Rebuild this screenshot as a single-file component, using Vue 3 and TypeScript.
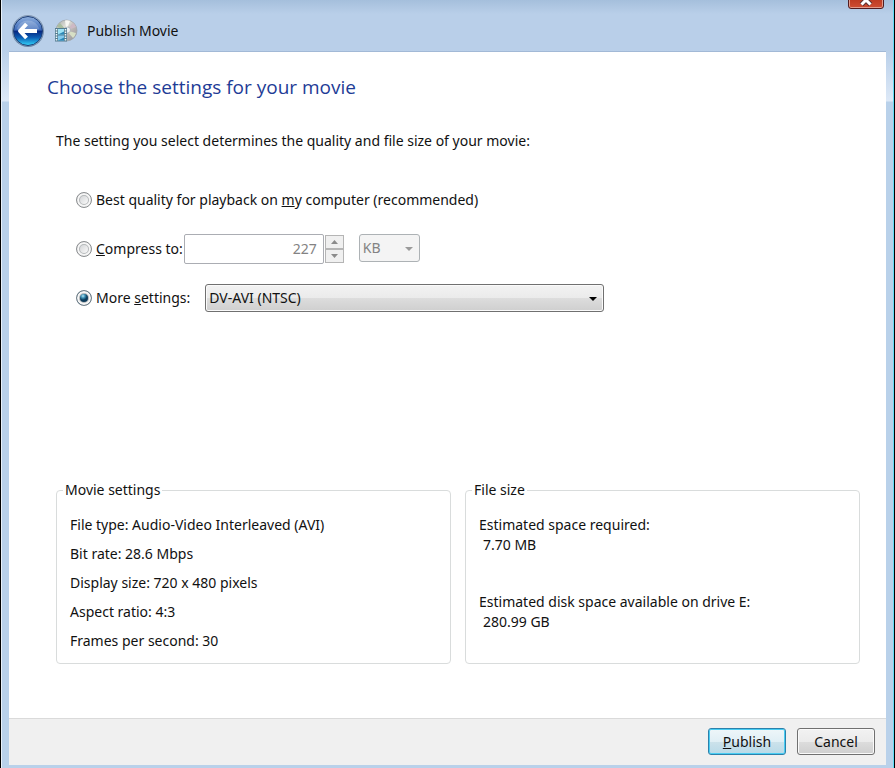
<script setup lang="ts">
import { ref } from 'vue'

type Mode = 'best' | 'compress' | 'more'

const mode = ref<Mode>('more')
const size = ref(227)
const unit = ref('KB')
const preset = ref('DV-AVI (NTSC)')

const movieSettings = [
  { name: 'File type', value: 'Audio-Video Interleaved (AVI)' },
  { name: 'Bit rate', value: '28.6 Mbps' },
  { name: 'Display size', value: '720 x 480 pixels' },
  { name: 'Aspect ratio', value: '4:3' },
  { name: 'Frames per second', value: '30' },
]

const fileSizes = [
  { name: 'Estimated space required', value: '7.70 MB' },
  { name: 'Estimated disk space available on drive E', value: '280.99 GB' },
]
</script>

<template>
  <div class="window">
    <header class="titlebar">
      <button class="back" type="button" aria-label="Back">
        <svg viewBox="0 0 34 34" width="34" height="34" aria-hidden="true">
          <defs>
            <linearGradient id="orb" x1="0" y1="0" x2="0" y2="1">
              <stop offset="0" stop-color="#8fb0de" />
              <stop offset="0.47" stop-color="#3a68b8" />
              <stop offset="0.5" stop-color="#06257f" />
              <stop offset="0.72" stop-color="#0b5cb4" />
              <stop offset="1" stop-color="#35d6fa" />
            </linearGradient>
            <linearGradient id="rim" x1="0" y1="0" x2="0" y2="1">
              <stop offset="0" stop-color="#5d6f88" />
              <stop offset="1" stop-color="#2a4a6c" />
            </linearGradient>
          </defs>
          <circle cx="17" cy="17" r="16" fill="url(#rim)" opacity="0.55" />
          <circle cx="17" cy="17" r="15" fill="#a9c2de" />
          <circle cx="17" cy="17" r="14.500" fill="url(#orb)" stroke="#1c3c74" stroke-width="1" />
          <path d="M5.500 15 A12 12 0 0 1 28.500 15 Q17 20 5.500 15Z" fill="#fff" opacity="0.2" />
          <path
            d="M15.500 10 L9 17 L15.500 24 M9.500 17 H26"
            fill="none"
            stroke="#fff"
            stroke-width="4"
            stroke-linejoin="round"
          />
        </svg>
      </button>
      <svg class="app-icon" viewBox="0 0 24 24" width="24" height="24" aria-hidden="true">
        <defs>
          <linearGradient id="disc" x1="0" y1="0" x2="1" y2="1">
            <stop offset="0" stop-color="#a3a8a5" />
            <stop offset="0.35" stop-color="#dcdcd6" />
            <stop offset="0.6" stop-color="#bcb6b5" />
            <stop offset="1" stop-color="#8d9296" />
          </linearGradient>
        </defs>
        <circle cx="12.500" cy="11.500" r="10.500" fill="url(#disc)" stroke="#9da1a3" stroke-width="0.700" />
        <path d="M12.500 11.500 L11 1.500 A10 10 0 0 1 16 1.800Z" fill="#f7f7f2" />
        <path d="M12.500 11.500 L19 4 A10 10 0 0 1 22 8Z" fill="#cdb9c4" />
        <path d="M12.500 11.500 L22 14 A10 10 0 0 1 19 19Z" fill="#d7dfc5" />
        <path d="M12.500 11.500 L3 8 A10 10 0 0 1 6 4Z" fill="#a9bda0" />
        <circle cx="13.500" cy="11" r="3" fill="#e9eef3" stroke="#a5abb0" stroke-width="0.800" />
        <rect x="1" y="9" width="12" height="13.500" fill="#547d91" />
        <rect x="4" y="10" width="6" height="5.500" fill="#9de2f5" />
        <rect x="4" y="16.500" width="6" height="5" fill="#83caee" />
        <path d="M4 15.500 L10 12.500 V15.500Z M4 21.500 L10 18.500 V21.500Z" fill="#2b87b7" />
        <path
          d="M2.500 10 V22 M11.500 10 V22"
          stroke="#eff8f9"
          stroke-width="1.500"
          stroke-dasharray="1.500 1"
        />
      </svg>
      <span class="app-name">Publish Movie</span>
      <button class="close" type="button" aria-label="Close">
        <svg viewBox="0 0 14 12" width="14" height="12" aria-hidden="true">
          <path d="M2.500 1.500 L11.500 10.500 M11.500 1.500 L2.500 10.500" stroke="#5c3030" stroke-width="5" />
          <path d="M2.500 1.500 L11.500 10.500 M11.500 1.500 L2.500 10.500" stroke="#fff" stroke-width="3" />
        </svg>
      </button>
    </header>

    <form class="page" @submit.prevent>
      <main class="content">
        <h1>Choose the settings for your movie</h1>
        <p class="intro">
          The setting you select determines the quality and file size of your movie:
        </p>

        <div class="options" role="radiogroup" aria-label="Movie quality">
          <div class="option">
            <input id="best" v-model="mode" type="radio" name="mode" value="best" />
            <label for="best">Best quality for playback on <u>m</u>y computer (recommended)</label>
          </div>
          <div class="option">
            <input id="compress" v-model="mode" type="radio" name="mode" value="compress" />
            <label for="compress"><u>C</u>ompress to:</label>
            <input
              v-model="size"
              class="size"
              type="text"
              aria-label="Size"
              :disabled="mode !== 'compress'"
            />
            <span class="spinner">
              <button
                type="button"
                aria-label="Increase size"
                :disabled="mode !== 'compress'"
                @click="size++"
              >
                <svg viewBox="0 0 7 4" width="7" height="4"><path d="M0 4 L3.500 0 L7 4Z" /></svg>
              </button>
              <button
                type="button"
                aria-label="Decrease size"
                :disabled="mode !== 'compress'"
                @click="size--"
              >
                <svg viewBox="0 0 7 4" width="7" height="4"><path d="M0 0 L3.500 4 L7 0Z" /></svg>
              </button>
            </span>
            <span class="dropdown unit">
              <select v-model="unit" aria-label="Unit" :disabled="mode !== 'compress'">
                <option>KB</option>
                <option>MB</option>
                <option>GB</option>
              </select>
              <svg viewBox="0 0 8 4" width="8" height="4"><path d="M0 0 H8 L4 4Z" /></svg>
            </span>
          </div>
          <div class="option">
            <input id="more" v-model="mode" type="radio" name="mode" value="more" />
            <label for="more">More <u>s</u>ettings:</label>
            <span class="dropdown preset">
              <select v-model="preset" aria-label="More settings" :disabled="mode !== 'more'">
                <option>DV-AVI (NTSC)</option>
              </select>
              <svg viewBox="0 0 8 4" width="8" height="4"><path d="M0 0 H8 L4 4Z" /></svg>
            </span>
          </div>
        </div>

        <div class="summary">
          <fieldset>
            <legend>Movie settings</legend>
            <ul class="facts">
              <li v-for="item in movieSettings" :key="item.name">
                {{ item.name }}: {{ item.value }}
              </li>
            </ul>
          </fieldset>
          <fieldset>
            <legend>File size</legend>
            <dl class="sizes">
              <div v-for="item in fileSizes" :key="item.name">
                <dt>{{ item.name }}:</dt>
                <dd>{{ item.value }}</dd>
              </div>
            </dl>
          </fieldset>
        </div>
      </main>

      <footer class="actions">
        <button class="push primary" type="submit"><span><u>P</u>ublish</span></button>
        <button class="push" type="button">Cancel</button>
      </footer>
    </form>
  </div>
</template>

<style>
body {
  margin: 0;
}
</style>

<style scoped>
* {
  box-sizing: border-box;
}

.window {
  display: flex;
  flex-direction: column;
  min-height: 100vh;
  padding: 0 8px 3px 7px;
  border-left: 1px solid #000;
  border-right: 1px solid #000;
  box-shadow: inset 1px 0 #e8f1fa, inset -1px 0 #5fdcf5;
  background: linear-gradient(#a5bfdc 0, #b9cfe9 14px, #b9cfe9 50px, #dde9f7 101px, #b9d1ea 102px);
  color: #111;
  font: 14px/20px "Noto Sans", "Open Sans", sans-serif;
}

button,
input,
select {
  margin: 0;
  color: inherit;
  font: inherit;
}

.titlebar {
  position: relative;
  display: flex;
  align-items: center;
  height: 51px;
  padding: 11px 0 0 3px;
}

.back {
  display: block;
  width: 34px;
  height: 34px;
  padding: 0;
  border: 0;
  border-radius: 50%;
  background: none;
}

.back svg,
.close svg,
.app-icon {
  display: block;
}

.app-icon {
  margin: 0 9px 0 9px;
}

.close {
  position: absolute;
  top: -10px;
  right: 2px;
  display: flex;
  align-items: flex-end;
  justify-content: center;
  width: 36px;
  height: 19px;
  padding: 0 0 2px;
  border: 1px solid #521c20;
  border-radius: 0 0 3px 3px;
  box-shadow: inset 0 0 0 1px #e29a8b;
  background: linear-gradient(#d98b7c, #bd3a22 50%, #cf4e33);
}

.page {
  display: flex;
  flex: 1;
  flex-direction: column;
  margin-left: 1px;
  border-top: 1px solid #a2b9d6;
  background: #fff;
}

.content {
  display: flex;
  flex: 1;
  flex-direction: column;
  padding: 21px 26px 54px 38px;
}

h1 {
  margin: 0;
  color: #1e3c96;
  font-family: "Open Sans", "Noto Sans", sans-serif;
  font-size: 19px;
  font-weight: 400;
  line-height: 28px;
}

.intro {
  margin: 30px 0 0 9px;
}

.options {
  display: flex;
  flex-direction: column;
  gap: 19px;
  margin: 34px 0 0 29px;
}

.option {
  display: flex;
  align-items: center;
  height: 30px;
}

input[type="radio"] {
  flex: none;
  width: 16px;
  height: 16px;
  margin-right: 4px;
  border: 1px solid #8b8e90;
  border-radius: 50%;
  appearance: none;
  box-shadow: inset 0 0 0 2px #f6f6f6, inset 0 0 0 3px #b5b8ba;
  background: linear-gradient(135deg, #c5c8cb, #f8f8f8 75%);
}

input[type="radio"]:checked {
  border-color: #6f7e88;
  background: radial-gradient(circle at 6px 5px, #b7e7f5 0, #3c8fb3 2px, #0c3c5c 4px, #0c3c5c 5px);
}

.size {
  width: 140px;
  height: 30px;
  margin-left: 1px;
  padding: 0 6px 2px;
  border: 1px solid #abadb3;
  border-radius: 2px;
  background: #fff;
  text-align: right;
}

.size:disabled,
.unit select:disabled {
  color: #838383;
}

.spinner {
  display: flex;
  flex-direction: column;
  width: 19px;
  height: 28px;
  margin-left: 1px;
}

.spinner button {
  display: flex;
  flex: 1;
  align-items: center;
  justify-content: center;
  padding: 0;
  border: 1px solid #b5b5b5;
  background: #f0f0f0;
}

.spinner svg {
  display: block;
  fill: #8b8b8b;
}

.dropdown {
  position: relative;
  display: flex;
  height: 28px;
}

.dropdown select {
  width: 100%;
  padding: 0 20px 0 3px;
  border: 1px solid #707070;
  border-radius: 3px;
  appearance: none;
  box-shadow: inset 0 0 0 1px #fafafa;
  background: linear-gradient(#f2f2f2, #ebebeb 50%, #dddddd 50%, #cfcfcf);
}

.dropdown select:disabled {
  border-color: #adb2b5;
  opacity: 1;
  box-shadow: none;
  background: #f4f4f4;
}

.dropdown svg {
  position: absolute;
  top: 13px;
  right: 7px;
  pointer-events: none;
}

.unit {
  width: 61px;
  margin: 0 0 2px 15px;
}

.unit svg {
  fill: #9a9a9a;
}

.preset {
  width: 399px;
  margin-left: 15px;
}

.summary {
  display: grid;
  grid-template-columns: 1fr 1fr;
  gap: 14px;
  margin: auto 0 0 9px;
}

fieldset {
  min-width: 0;
  margin: 0;
  padding: 15px 13px 12px;
  border: 1px solid #d9dcdc;
  border-radius: 4px;
}

legend {
  margin-left: -7px;
  padding: 0 2px;
}

.facts,
.sizes,
.sizes dd {
  margin: 0;
  padding: 0;
}

.facts {
  display: grid;
  gap: 9px;
  list-style: none;
}

.sizes {
  display: grid;
  gap: 37px;
}

.sizes dd {
  padding-left: 4px;
}

.actions {
  display: flex;
  align-items: flex-start;
  justify-content: flex-end;
  gap: 11px;
  padding: 9px 11px 10px;
  border-top: 1px solid #dadada;
  background: #f0f0f0;
}

.push {
  width: 78px;
  height: 27px;
  padding: 0;
  border: 1px solid #707070;
  border-radius: 3px;
  box-shadow: inset 0 0 0 1px #fafafa;
  background: linear-gradient(#f2f2f2, #ebebeb 50%, #dddddd 50%, #cfcfcf);
}

.primary {
  border-color: #2c81ab;
  box-shadow: inset 0 0 0 1px #48cdf3;
  background: linear-gradient(#eef6f9, #e0eff5 50%, #cde2eb 50%, #b8dae8);
}
</style>
